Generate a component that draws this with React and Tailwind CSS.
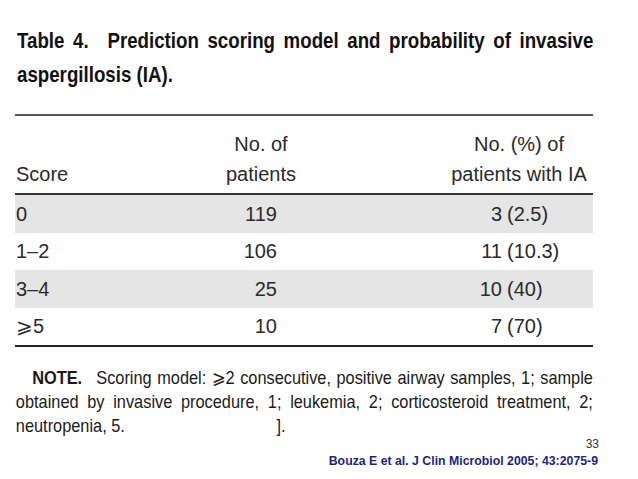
const rows = [
  { score: "0", n: "119", ia: "3", pct: "(2.5)", shade: true },
  { score: "1–2", n: "106", ia: "11", pct: "(10.3)" },
  { score: "3–4", n: "25", ia: "10", pct: "(40)", shade: true },
  { score: "⩾5", n: "10", ia: "7", pct: "(70)" },
]

export default function App() {
  return (
    <div className="w-[638px] h-[479px] overflow-hidden bg-white font-['Liberation_Sans',Arial,sans-serif]">
      <div className="ml-[15px] w-[578px]">
        {/* title, condensed face */}
        <div className="pt-[24px] pl-[2px]">
          <div className="w-[678px] origin-left scale-x-[0.85] text-[22px] leading-[34px] font-bold text-[#111]">
            <div className="text-justify [text-align-last:justify]">
              Table 4.<span className="inline-block w-[12px]"></span> Prediction scoring model and probability of invasive
            </div>
            <div>aspergillosis (IA).</div>
          </div>
        </div>

        <div className="mt-[22px] h-[2px] bg-[#555]" />

        {/* table head */}
        <div className="grid grid-cols-[210px_72px_148px_148px] items-end pt-[13px] pb-[4px] text-[20px] leading-[30px] text-[#2a2a2a]">
          <div className="pl-[1px]">Score</div>
          <div className="text-center whitespace-nowrap">
            No. of
            <br />
            patients
          </div>
          <div />
          <div className="text-center whitespace-nowrap">
            No. (%) of
            <br />
            patients with IA
          </div>
        </div>
        <div className="h-[2px] bg-[#333]" />

        {/* rows */}
        {rows.map((r) => (
          <div
            key={r.score}
            className={`grid h-[37.5px] grid-cols-[210px_72px_148px_148px] items-center text-[20px] leading-[30px] text-[#2a2a2a] ${
              r.shade ? "bg-[#e5e5e5]" : "bg-white"
            }`}
          >
            <div className="pl-[1px]">{r.score}</div>
            <div className="pr-[20px] text-right">{r.n}</div>
            <div />
            <div className="flex">
              <span className="w-[57px] text-right">{r.ia}</span>
              <span className="ml-[5px]">{r.pct}</span>
            </div>
          </div>
        ))}
        <div className="h-[2px] bg-[#222]" />

        {/* note */}
        <div className="mt-[19px]">
          <div className="w-[672px] origin-left scale-x-[0.86] text-[19px] leading-[24px] text-[#1a1a1a]">
            <div className="pl-[20px] text-justify [text-align-last:justify]">
              <b>NOTE.</b>
              <span className="inline-block w-[10px]"></span> Scoring model: ⩾2 consecutive, positive airway samples, 1; sample
            </div>
            <div className="pl-[1px] text-justify [text-align-last:justify]">
              obtained by invasive procedure, 1; leukemia, 2; corticosteroid treatment, 2;
            </div>
            <div className="flex pl-[1px]">
              <span className="w-[303px]">neutropenia, 5.</span>
              <span>].</span>
            </div>
          </div>
        </div>
      </div>

      {/* footer */}
      <div className="-mt-[1px] pr-[39px] text-right text-[12px] leading-[14px] text-[#333]">33</div>
      <div className="mt-[3px] pr-[40px] text-right text-[12.3px] leading-[15px] font-bold text-[#1f1f7a]">
        Bouza E et al. J Clin Microbiol 2005; 43:2075-9
      </div>
    </div>
  )
}
